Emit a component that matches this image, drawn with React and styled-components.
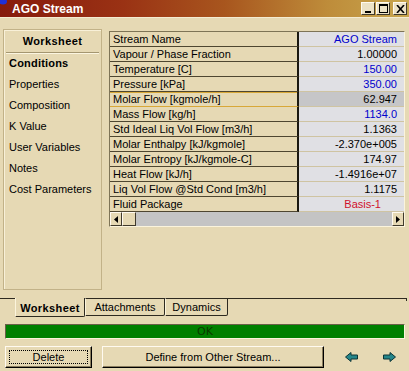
import React from "react";
import styled, { createGlobalStyle } from "styled-components";

const BEIGE = "#e6d9b4";

const GlobalStyle = createGlobalStyle`
  html, body {
    margin: 0;
    padding: 0;
    background: ${BEIGE};
  }
  body {
    font-family: "Liberation Sans", Arial, sans-serif;
    font-size: 11px;
    color: #000;
  }
`;

const Window = styled.div`
  width: 409px;
  height: 371px;
  display: flex;
  flex-direction: column;
  background: ${BEIGE};
  overflow: hidden;
`;

const TitleBar = styled.div`
  height: 17px;
  display: flex;
  align-items: center;
  padding-right: 2px;
  background: linear-gradient(90deg, #861a0c 0%, #9a3214 30%, #a8561e 55%, #be8c3a 80%, #c8a64e 100%);
  box-shadow: 0 1px 0 #f4ecd2;
`;

const TitleText = styled.div`
  flex: 1;
  color: #fff;
  font-weight: bold;
  font-size: 12px;
  padding-top: 1px;
`;

const WinButtons = styled.div`
  display: flex;
  align-items: center;
  gap: 1px;
`;

const WinButton = styled.div`
  width: 14px;
  height: 13px;
  box-sizing: border-box;
  margin-left: ${(p) => (p.$gap ? "2px" : "0")};
  background: #ece2c6;
  border: 1px solid;
  border-color: #fffaf0 #403a2c #403a2c #fffaf0;
  display: flex;
  align-items: center;
  justify-content: center;
`;

const Main = styled.div`
  height: 281px;
  display: flex;
  align-items: flex-start;
  padding: 12px 4px 0 3px;
  box-sizing: border-box;
`;

const SidePanel = styled.div`
  width: 99px;
  height: 261px;
  box-sizing: border-box;
  border: 1px solid #c2b288;
  box-shadow: inset 1px 1px 0 #f8f0d8;
  display: flex;
  flex-direction: column;
`;

const PanelHeader = styled.div`
  height: 22px;
  line-height: 23px;
  margin: 0 2px;
  text-align: center;
  font-weight: bold;
  letter-spacing: 0.4px;
  border-bottom: 1px solid #a49670;
  box-shadow: 0 1px 0 #fbf5e0;
`;

const NavItem = styled.div`
  height: 21px;
  line-height: 21px;
  padding-left: 5px;
  font-weight: ${(p) => (p.$active ? "bold" : "normal")};
  letter-spacing: ${(p) => (p.$active ? "0.2px" : "0")};
  &:first-of-type {
    margin-top: 2px;
  }
`;

const TableFrame = styled.div`
  width: 296px;
  margin: 2px 0 0 7px;
  box-sizing: border-box;
  border: 1px solid;
  border-color: #7e7456 #fbf4dc #fbf4dc #7e7456;
  display: flex;
  flex-direction: column;
`;

const Row = styled.div`
  display: flex;
  height: 15px;
`;

const LabelCell = styled.div`
  width: 189px;
  box-sizing: border-box;
  padding-left: 3px;
  line-height: 14px;
  white-space: nowrap;
  border-right: 2px solid #1a1810;
  border-bottom: 1px solid ${(p) => (p.$selected ? "#d8a838" : "#4e4630")};
  box-shadow: ${(p) => (p.$selected ? "inset 0 1px 0 #d8a838" : "none")};
`;

const ValueCell = styled.div`
  flex: 1;
  box-sizing: border-box;
  padding-right: ${(p) => p.$pad || 7}px;
  line-height: 14px;
  text-align: right;
  color: ${(p) => p.$color || "#000"};
  background: ${(p) => (p.$selected ? "#c6c6c8" : "#e0e0e4")};
  border-bottom: 1px solid #cfc4a2;
`;

const ScrollBar = styled.div`
  display: flex;
  height: 14px;
  background: #c4c4c4;
`;

const ScrollButton = styled.div`
  width: ${(p) => p.$w || 12}px;
  height: 14px;
  box-sizing: border-box;
  background: ${BEIGE};
  border: 1px solid;
  border-color: #fffaf0 #403a2c #403a2c #fffaf0;
  display: flex;
  align-items: center;
  justify-content: center;
`;

const Track = styled.div`
  flex: 1;
`;

const TabStrip = styled.div`
  display: flex;
  height: 19px;
  align-items: flex-start;
`;

const TabLine = styled.div`
  width: ${(p) => (p.$grow ? "auto" : "15px")};
  flex: ${(p) => (p.$grow ? 1 : "none")};
  height: 3px;
  box-sizing: border-box;
  border-top: 1px solid #2e2a20;
  border-right: ${(p) => (p.$grow ? "1px solid #2e2a20" : "none")};
  margin-right: ${(p) => (p.$grow ? "2px" : "0")};
`;

const Tab = styled.div`
  width: ${(p) => p.$w}px;
  height: ${(p) => (p.$active ? 19 : 18)}px;
  box-sizing: border-box;
  text-align: center;
  line-height: 16px;
  font-weight: ${(p) => (p.$active ? "bold" : "normal")};
  letter-spacing: ${(p) => (p.$active ? "0.4px" : "0")};
  border-top: ${(p) => (p.$active ? "none" : "1px solid #2e2a20")};
  border-left: 1px solid #fbf4dc;
  border-right: 1px solid #2e2a20;
  border-bottom: 1px solid #2e2a20;
  border-bottom-right-radius: 2px;
  padding-top: ${(p) => (p.$active ? "2px" : "0")};
`;

const StatusBar = styled.div`
  margin: 7px 4px 0 5px;
  height: 15px;
  box-sizing: border-box;
  background: #008000;
  border: 1px solid;
  border-color: #6a6048 #fbf4dc #fbf4dc #6a6048;
  color: #0a3a00;
  text-align: center;
  line-height: 13px;
  font-family: "DejaVu Sans", sans-serif;
  font-size: 11px;
`;

const ButtonRow = styled.div`
  display: flex;
  align-items: center;
  margin-top: 7px;
  padding-left: 5px;
`;

const Button = styled.div`
  width: ${(p) => p.$w}px;
  height: 22px;
  margin-left: ${(p) => p.$ml || 0}px;
  box-sizing: border-box;
  background: ${BEIGE};
  border: 1px solid;
  border-color: #fffaf0 #000 #000 #fffaf0;
  box-shadow: inset -1px -1px 0 #8a7e5e;
  padding: 3px;
  display: flex;
`;

const ButtonLabel = styled.div`
  flex: 1;
  display: flex;
  align-items: center;
  justify-content: center;
  border: 1px dotted ${(p) => (p.$focus ? "#000" : "transparent")};
`;

const ArrowButton = styled.div`
  margin-left: ${(p) => p.$ml}px;
  display: flex;
  align-items: center;
`;

const rows = [
  { label: "Stream Name", value: "AGO Stream", color: "#0000cc" },
  { label: "Vapour / Phase Fraction", value: "1.00000" },
  { label: "Temperature [C]", value: "150.00", color: "#0000cc" },
  { label: "Pressure [kPa]", value: "350.00", color: "#0000cc" },
  { label: "Molar Flow [kgmole/h]", value: "62.947", selected: true },
  { label: "Mass Flow [kg/h]", value: "1134.0", color: "#0000cc" },
  { label: "Std Ideal Liq Vol Flow [m3/h]", value: "1.1363" },
  { label: "Molar Enthalpy [kJ/kgmole]", value: "-2.370e+005" },
  { label: "Molar Entropy [kJ/kgmole-C]", value: "174.97" },
  { label: "Heat Flow [kJ/h]", value: "-1.4916e+07" },
  { label: "Liq Vol Flow @Std Cond [m3/h]", value: "1.1175" },
  { label: "Fluid Package", value: "Basis-1", color: "#d0102c", pad: 23 },
];

const navItems = ["Conditions", "Properties", "Composition", "K Value", "User Variables", "Notes", "Cost Parameters"];

function Arrow({ dir }) {
  const pts = dir === "left" ? "0.5,5 6,0.5 6,3 12.5,3 12.5,7 6,7 6,9.5" : "12.5,5 7,0.5 7,3 0.5,3 0.5,7 7,7 7,9.5";
  return (
    <svg width="13" height="10" viewBox="0 0 13 10">
      <polygon points={pts} fill="#24868a" stroke="#0c3436" strokeWidth="1" />
    </svg>
  );
}

export default function App() {
  return (
    <Window>
      <GlobalStyle />
      <TitleBar>
        <svg width="12" height="17" viewBox="0 0 12 17" style={{ alignSelf: "flex-start" }}>
          <ellipse cx="3" cy="1.5" rx="4" ry="3" fill="#2030d8" />
        </svg>
        <TitleText>AGO Stream</TitleText>
        <WinButtons>
          <WinButton>
            <svg width="8" height="8" viewBox="0 0 8 8">
              <rect x="1" y="6" width="6" height="2" fill="#000" />
            </svg>
          </WinButton>
          <WinButton>
            <svg width="9" height="9" viewBox="0 0 9 9">
              <rect x="0.5" y="0.5" width="8" height="8" fill="none" stroke="#000" />
              <rect x="0" y="0" width="9" height="2" fill="#000" />
            </svg>
          </WinButton>
          <WinButton $gap>
            <svg width="9" height="8" viewBox="0 0 9 8">
              <path d="M1 0 L8 8 M8 0 L1 8" stroke="#000" strokeWidth="1.6" />
            </svg>
          </WinButton>
        </WinButtons>
      </TitleBar>

      <Main>
        <SidePanel>
          <PanelHeader>Worksheet</PanelHeader>
          {navItems.map((n, i) => (
            <NavItem key={n} $active={i === 0}>
              {n}
            </NavItem>
          ))}
        </SidePanel>

        <TableFrame>
          {rows.map((r) => (
            <Row key={r.label}>
              <LabelCell $selected={r.selected}>{r.label}</LabelCell>
              <ValueCell $selected={r.selected} $color={r.color} $pad={r.pad}>
                {r.value}
              </ValueCell>
            </Row>
          ))}
          <ScrollBar>
            <ScrollButton>
              <svg width="4" height="7" viewBox="0 0 4 7">
                <polygon points="4,0 0,3.5 4,7" fill="#000" />
              </svg>
            </ScrollButton>
            <ScrollButton $w={14} />
            <Track />
            <ScrollButton>
              <svg width="4" height="7" viewBox="0 0 4 7">
                <polygon points="0,0 4,3.5 0,7" fill="#000" />
              </svg>
            </ScrollButton>
          </ScrollBar>
        </TableFrame>
      </Main>

      <TabStrip>
        <TabLine />
        <Tab $w={70} $active>
          Worksheet
        </Tab>
        <Tab $w={80}>Attachments</Tab>
        <Tab $w={63}>Dynamics</Tab>
        <TabLine $grow />
      </TabStrip>

      <StatusBar>OK</StatusBar>

      <ButtonRow>
        <Button $w={87}>
          <ButtonLabel $focus>Delete</ButtonLabel>
        </Button>
        <Button $w={222} $ml={10}>
          <ButtonLabel>Define from Other Stream...</ButtonLabel>
        </Button>
        <ArrowButton $ml={21}>
          <Arrow dir="left" />
        </ArrowButton>
        <ArrowButton $ml={25}>
          <Arrow dir="right" />
        </ArrowButton>
      </ButtonRow>
    </Window>
  );
}
